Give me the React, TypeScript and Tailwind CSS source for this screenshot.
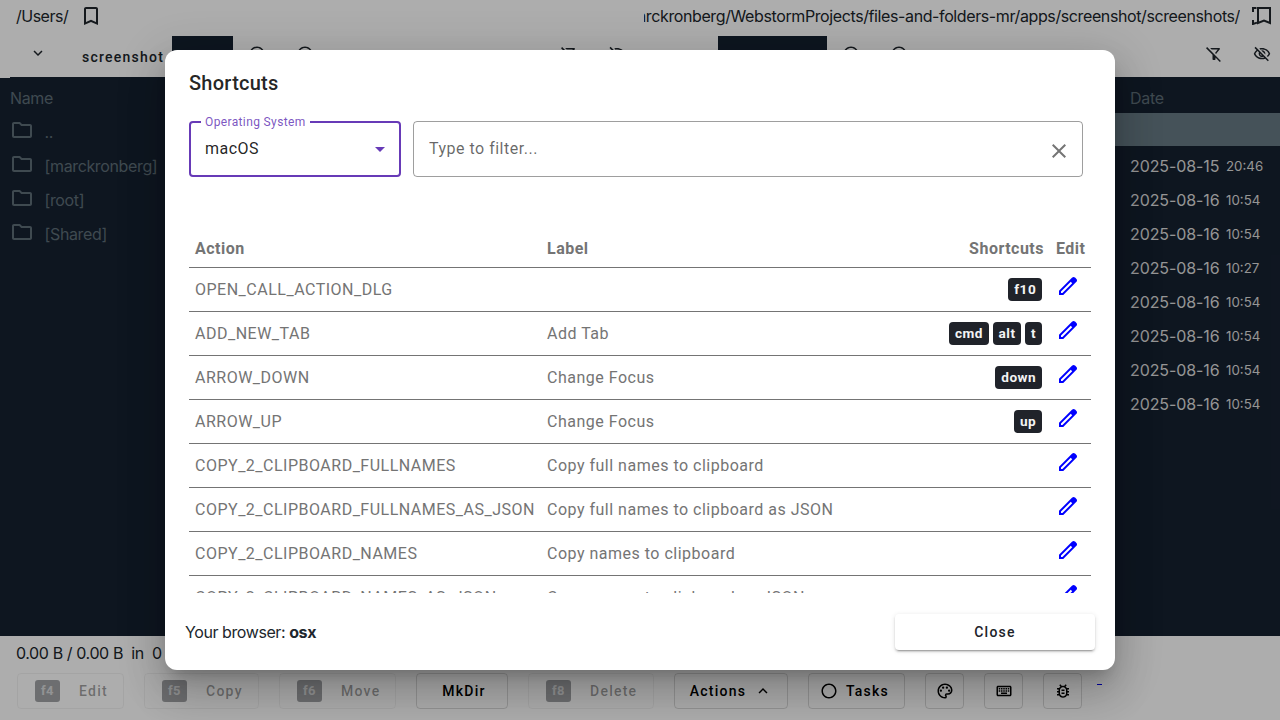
import type { ReactNode } from "react";
import {
  MdBookmarkBorder,
  MdClose,
  MdKeyboardArrowDown,
  MdKeyboardArrowUp,
  MdOutlineBugReport,
  MdOutlineFilterAltOff,
  MdOutlineFolder,
  MdOutlineKeyboard,
  MdOutlinePalette,
  MdOutlineVisibilityOff,
  MdRadioButtonUnchecked,
} from "react-icons/md";

const roboto = "font-['Roboto','Liberation_Sans',sans-serif]";

const folders = ["..", "[marckronberg]", "[root]", "[Shared]"];

const dates = [
  ["2025-08-15", "20:46"],
  ["2025-08-16", "10:54"],
  ["2025-08-16", "10:54"],
  ["2025-08-16", "10:27"],
  ["2025-08-16", "10:54"],
  ["2025-08-16", "10:54"],
  ["2025-08-16", "10:54"],
  ["2025-08-16", "10:54"],
];

const shortcuts: { action: string; label: string; keys: string[] }[] = [
  { action: "OPEN_CALL_ACTION_DLG", label: "", keys: ["f10"] },
  { action: "ADD_NEW_TAB", label: "Add Tab", keys: ["cmd", "alt", "t"] },
  { action: "ARROW_DOWN", label: "Change Focus", keys: ["down"] },
  { action: "ARROW_UP", label: "Change Focus", keys: ["up"] },
  { action: "COPY_2_CLIPBOARD_FULLNAMES", label: "Copy full names to clipboard", keys: [] },
  { action: "COPY_2_CLIPBOARD_FULLNAMES_AS_JSON", label: "Copy full names to clipboard as JSON", keys: [] },
  { action: "COPY_2_CLIPBOARD_NAMES", label: "Copy names to clipboard", keys: [] },
  { action: "COPY_2_CLIPBOARD_NAMES_AS_JSON", label: "Copy names to clipboard as JSON", keys: [] },
];

function PencilIcon() {
  return (
    <svg className="size-6" viewBox="0 -960 960 960" fill="#0000ff">
      <path d="M200-200h57l391-391-57-57-391 391v57Zm-80 80v-170l528-527q12-11 26.5-17t30.5-6q16 0 31 6t26 18l55 56q12 11 17.5 26t5.5 30q0 16-5.5 30.5T817-647L290-120H120Zm640-584-56-56 56 56Zm-141 85-28-29 57 57-29-28Z" />
    </svg>
  );
}

function Header() {
  return (
    <div className="flex h-9 shrink-0 items-start text-base leading-8 tracking-[-0.39px] text-[#20262c]">
      <div className="flex w-[640px] pl-4">
        <span className="w-[63px] tracking-[-0.5px]">/Users/</span>
        <MdBookmarkBorder className="mt-1 size-6" />
      </div>
      <div className="flex w-[640px] pl-[4px]">
        <div className="flex w-[596px] justify-end overflow-hidden whitespace-nowrap">
          <span>/Users/marckronberg/WebstormProjects/files-and-folders-mr/apps/screenshot/screenshots/</span>
        </div>
        <svg className="ml-3 mt-[7px] h-[18px] w-5" viewBox="0 0 20 18" fill="none" stroke="#20262c" strokeWidth="2">
          <path d="M4.5 1H1V5M1 13V17L5 15.6" />
          <path d="M6 1H18V16L12 13.5L6 16Z" />
        </svg>
      </div>
    </div>
  );
}

function TabBar() {
  return (
    <div className="flex h-[41px] shrink-0 text-[#20262c]">
      <div className="flex w-[645px]">
        <MdKeyboardArrowDown className="ml-[29px] mt-2 size-[18px]" />
        <span className={"ml-[35px] w-[90px] pt-[11px] text-sm leading-5 font-medium tracking-[1.25px] " + roboto}>
          screenshot
        </span>
        <div className="w-[61px] bg-[#162130]" />
        <MdRadioButtonUnchecked className="ml-[15px] mt-[9px] size-[18px]" />
        <MdRadioButtonUnchecked className="ml-[30px] mt-[9px] size-[18px]" />
        <MdOutlineFilterAltOff className="ml-auto mt-[9px] size-[18px]" />
        <MdOutlineVisibilityOff className="ml-[30px] mr-[19px] mt-[9px] size-[18px]" />
      </div>
      <div className="flex w-[635px]">
        <div className="ml-[73px] w-[109px] bg-[#162130]" />
        <MdRadioButtonUnchecked className="ml-[15px] mt-[9px] size-[18px]" />
        <MdRadioButtonUnchecked className="ml-[30px] mt-[9px] size-[18px]" />
        <MdOutlineFilterAltOff className="ml-auto mt-[9px] size-[18px]" />
        <MdOutlineVisibilityOff className="ml-[30px] mr-[9px] mt-[9px] size-[18px]" />
      </div>
    </div>
  );
}

function Panels() {
  return (
    <div className="flex h-[559px] shrink-0 bg-[#162130] text-base">
      <div className="w-[640px] tracking-[-0.36px] text-[#5d6d77]">
        <div className="h-px w-[10px] bg-white" />
        <div className="h-[35px] pl-[10px] leading-[40px]">Name</div>
        {folders.map((name) => (
          <div key={name} className="flex h-[34px] pl-[10px]">
            <MdOutlineFolder className="mt-[5px] size-6" />
            <span className="ml-[10.5px] leading-[38px]">{name}</span>
          </div>
        ))}
      </div>
      <div className="w-[640px] tracking-[-0.1px] text-[#dcdcdc]">
        <div className="h-9 pl-[490px] leading-[42px] tracking-[-0.25px] text-[#5d6d77]">Date</div>
        <div className="h-[33px] bg-[#667983]" />
        <div className="h-px" />
        {dates.map(([day, time], i) => (
          <div key={i} className="flex h-[34px] pl-[490px] leading-[38px]">
            <span className="w-24">{day}</span>
            <span className="text-[13.3px] tracking-normal">{time}</span>
          </div>
        ))}
      </div>
    </div>
  );
}

function ActionButton({ width, hotkey, disabled, children }: {
  width: string;
  hotkey?: string;
  disabled?: boolean;
  children: ReactNode;
}) {
  return (
    <div
      className={
        "flex h-9 shrink-0 items-center rounded border text-sm font-medium tracking-[1.25px] " +
        (hotkey ? "pl-[17px] " : "justify-center ") +
        (disabled ? "border-black/5 text-black/38 " : "border-black/15 text-black ") +
        width
      }
    >
      {hotkey && (
        <span className="mr-[19px] flex h-[22px] w-[25px] items-center justify-center rounded-[3px] bg-[#20232a]/42 text-[13px] font-bold tracking-[0.4px] text-white/60">
          {hotkey}
        </span>
      )}
      {children}
    </div>
  );
}

function Footer() {
  return (
    <div className="shrink-0">
      <div className="h-[37px] pl-4 text-base leading-[35px] tracking-[-0.39px] whitespace-pre text-[#20262c]">
        {"0.00 B / 0.00 B  in  0 files"}
      </div>
      <div className={"flex gap-5 pl-[17px] " + roboto}>
        <ActionButton width="w-[107px]" hotkey="f4" disabled>Edit</ActionButton>
        <ActionButton width="w-[115px]" hotkey="f5" disabled>Copy</ActionButton>
        <ActionButton width="w-[117px]" hotkey="f6" disabled>Move</ActionButton>
        <ActionButton width="w-[92px]"><span className="pl-1">MkDir</span></ActionButton>
        <ActionButton width="w-[126px]" hotkey="f8" disabled>Delete</ActionButton>
        <ActionButton width="w-[114px]">
          Actions<MdKeyboardArrowUp className="ml-2 size-[18px]" />
        </ActionButton>
        <ActionButton width="w-[97px] pr-1">
          <MdRadioButtonUnchecked className="mr-2 size-[18px]" />Tasks
        </ActionButton>
        <ActionButton width="w-[39px]"><MdOutlinePalette className="size-[18px]" /></ActionButton>
        <ActionButton width="w-[39px]"><MdOutlineKeyboard className="size-[18px]" /></ActionButton>
        <ActionButton width="w-[39px]"><MdOutlineBugReport className="size-[18px]" /></ActionButton>
        <div className="-ml-[5px] mt-[11px] h-px w-[5px] bg-[#0000ee]" />
      </div>
    </div>
  );
}

function ShortcutsDialog() {
  return (
    <div
      className={
        "flex h-[620px] w-[950px] flex-col overflow-hidden rounded-xl bg-white shadow-[0_11px_15px_-7px_rgba(0,0,0,0.2),0_24px_38px_3px_rgba(0,0,0,0.14),0_9px_46px_8px_rgba(0,0,0,0.12)] " +
        roboto
      }
    >
      <h2 className="h-[71px] shrink-0 pl-6 pt-[17px] text-xl leading-8 font-medium tracking-[0.25px] text-black/87">
        Shortcuts
      </h2>
      <div className="flex shrink-0 gap-3 pl-6">
        <div className="relative flex h-14 w-[212px] items-center rounded border-2 border-[#673ab7] pl-[14px] pr-[14px] tracking-[0.5px] text-black/87">
          <span className="absolute -top-[9px] left-[10px] bg-white px-1 text-xs leading-4 tracking-[0.37px] whitespace-nowrap text-[#673ab7]/87">
            Operating System
          </span>
          <span className="flex-1">macOS</span>
          <svg className="h-[5px] w-[10px]" viewBox="0 0 10 5" fill="#673ab7"><path d="M0 0H10L5 5Z" /></svg>
        </div>
        <div className="flex h-14 w-[670px] items-center justify-between rounded border border-black/38 pl-[15px] pr-[11px] tracking-[0.5px] text-black/60">
          <span>Type to filter...</span>
          <MdClose className="mt-1 size-6 text-[#757575]" />
        </div>
      </div>
      <div className="ml-6 mt-[53px] h-[363px] w-[902px] shrink-0 overflow-hidden text-base tracking-[0.5px] text-[#747474]">
        <div className="flex h-[38px] border-b border-[#747474] font-bold leading-[37px]">
          <span className="w-[358px] pl-1.5">Action</span>
          <span className="flex-1">Label</span>
          <span className="w-[120px] text-right">Shortcuts</span>
          <span className="w-[47px] pl-3">Edit</span>
        </div>
        {shortcuts.map((s) => (
          <div key={s.action} className="flex h-11 border-b border-[#747474] leading-[43px] whitespace-nowrap">
            <span className="w-[358px] pl-1.5">{s.action}</span>
            <span className="flex-1">{s.label}</span>
            <span className="flex items-center gap-1">
              {s.keys.map((k) => (
                <kbd
                  key={k}
                  className="h-[23px] rounded bg-[#20232a] px-[5.8px] font-[Roboto] text-[13.6px] leading-[23px] font-bold tracking-[0.5px] text-[#f4f4f4]"
                >
                  {k}
                </kbd>
              ))}
            </span>
            <span className="w-[49px] pl-[13.6px] pt-1.5">
              <PencilIcon />
            </span>
          </div>
        ))}
      </div>
      <div className="flex items-start justify-between pl-5 pr-5 pt-[21px]">
        <span className="font-['Inter',sans-serif] text-base leading-9 tracking-[-0.42px] text-[#20262c]">
          Your browser: <b>osx</b>
        </span>
        <button className="h-9 w-[200px] rounded bg-white text-sm font-medium tracking-[1.25px] text-[#20232a] shadow-[0_3px_1px_-2px_rgba(0,0,0,0.2),0_2px_2px_0_rgba(0,0,0,0.14),0_1px_5px_0_rgba(0,0,0,0.12)]">
          Close
        </button>
      </div>
    </div>
  );
}

export default function App() {
  return (
    <div className="relative h-[720px] w-[1280px] overflow-hidden bg-white font-['Inter',sans-serif]">
      <div className="flex h-full flex-col">
        <Header />
        <TabBar />
        <Panels />
        <Footer />
      </div>
      <div className="absolute inset-0 flex items-center justify-center bg-black/32">
        <ShortcutsDialog />
      </div>
    </div>
  );
}
